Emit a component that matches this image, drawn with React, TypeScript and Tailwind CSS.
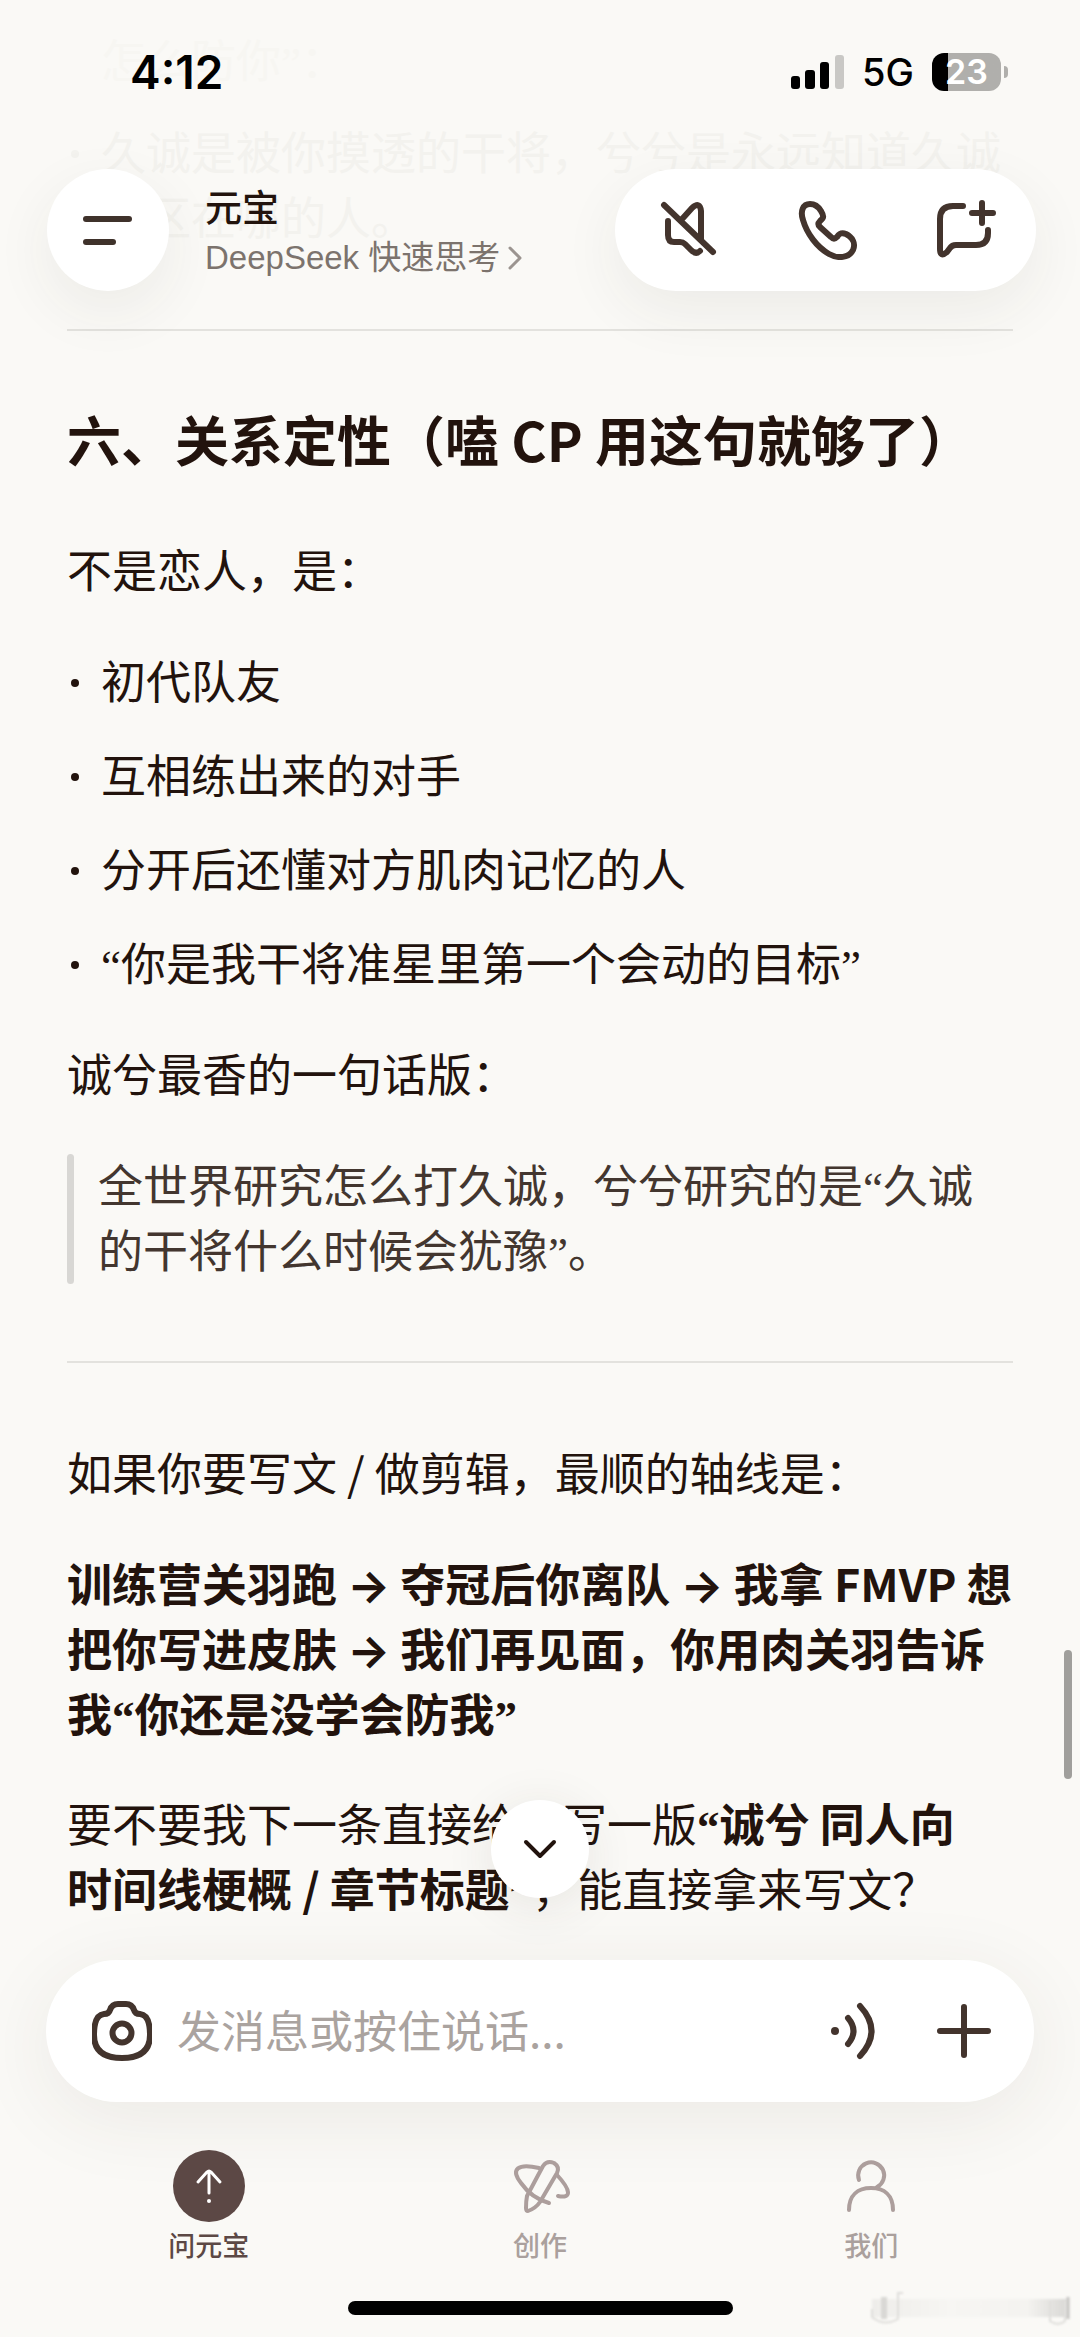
import type { ReactNode } from 'react';

function StatusBar() {
  return (
    <div className="flex items-center justify-between pl-[130px] pr-[72px] pt-12 h-24">
      <time className="text-[46px] leading-12 font-semibold font-[Inter,sans-serif]">4:12</time>
      <div className="flex items-center gap-[18px]">
        <svg width="53" height="34" viewBox="0 0 53 34" aria-hidden="true">
          <rect x="0" y="21" width="9" height="13" rx="3" />
          <rect x="14" y="15" width="10" height="19" rx="3" />
          <rect x="29" y="7" width="9" height="27" rx="3" />
          <rect x="44" y="0" width="9" height="34" rx="3" fill="#c9c8c5" />
        </svg>
        <span className="text-[38px] leading-10 font-medium font-[Inter,sans-serif]">5G</span>
        <div className="flex items-center gap-[3px]">
          <div className="flex h-[38px] w-[69px] items-center justify-center rounded-xl bg-linear-to-r from-black from-23% to-[#b0afac] to-23%">
            <span className="text-[34px] leading-[38px] font-semibold text-white font-[Inter,sans-serif]">23</span>
          </div>
          <div className="h-3 w-1 rounded-r-full bg-[#b0afac]" />
        </div>
      </div>
    </div>
  );
}

function IconButton({ label, children }: { label: string; children: ReactNode }) {
  return (
    <button type="button" aria-label={label} className="flex shrink-0 items-center justify-center">
      <svg
        width="60"
        height="60"
        viewBox="0 0 60 60"
        fill="none"
        stroke="currentColor"
        strokeWidth="6"
        strokeLinecap="round"
        strokeLinejoin="round"
        aria-hidden="true"
      >
        {children}
      </svg>
    </button>
  );
}

function Header() {
  return (
    <header className="absolute inset-x-0 top-0 z-10 text-black">
      <StatusBar />
      <div className="flex items-center justify-between pl-[47px] pr-11 pt-[73px]">
        <div className="flex items-center gap-9">
          <button
            type="button"
            aria-label="菜单"
            className="flex size-[122px] flex-col justify-center gap-[17px] rounded-full bg-white pl-9 shadow-[0_20px_60px_rgba(60,50,40,0.07)]"
          >
            <span className="h-[6px] w-[49px] rounded-full bg-[#3f322b]" />
            <span className="h-[6px] w-[33px] rounded-full bg-[#3f322b]" />
          </button>
          <div className="pt-1">
            <h1 className="mb-1 text-[37px] leading-[48px] font-medium text-[#22130d]">元宝</h1>
            <button
              type="button"
              className="flex items-center gap-2 text-[33px] leading-[48px] text-[#7c736d] font-['Liberation_Sans','Noto_Sans_CJK_SC',sans-serif]"
            >
              DeepSeek 快速思考
              <svg width="14" height="24" viewBox="0 0 14 24" fill="none" stroke="#9b9490" strokeWidth="3" strokeLinecap="round" strokeLinejoin="round" aria-hidden="true">
                <path d="M2 2l10 10L2 22" />
              </svg>
            </button>
          </div>
        </div>
        <div className="flex h-[122px] w-[421px] items-center justify-between rounded-full bg-white pl-11 pr-10 text-[#43342d] shadow-[0_20px_60px_rgba(60,50,40,0.07)]">
          <IconButton label="静音">
            <path d="M5 5l49 47M9 21v14q0 7 6 7h6q3 0 5 2l6 6q5 5 9 1M24 18l9-10q8-7 9 3v28" />
          </IconButton>
          <IconButton label="通话">
            <path d="M12 4C5 4 2 11 5 20c4 14 14 27 26 34 9 5 20 4 24-4 3-7-1-13-7-16-5-2-7 0-9 3-2 2-4 2-6 0L22 27c-2-2-2-4 0-6 4-3 4-5 1-10-3-5-6-7-11-7z" />
          </IconButton>
          <IconButton label="新对话">
            <path d="M27 6H17Q4 6 4 19v30q0 9 7 3l3-4q2-3 6-3h20q12 0 12-12v-3M46 3v20M36 13h21" />
          </IconButton>
        </div>
      </div>
    </header>
  );
}

// The CJK face draws quotes and arrows full width, so they get their own faces
function Quote({ children }: { children: string }) {
  return <span className="leading-none font-['Liberation_Serif',serif]">{children}</span>;
}

function Arrow() {
  return <span className="leading-none font-[Inter,sans-serif]">→</span>;
}

function Bullet({ children }: { children: ReactNode }) {
  return (
    <li className="flex items-start gap-[22px]">
      <span className="ml-1 mt-8 size-2 shrink-0 rounded-full bg-current" />
      <p>{children}</p>
    </li>
  );
}

function Message() {
  return (
    <article className="px-[67px] pt-[26px] text-[45px] leading-[65px]">
      <ul className="flex h-[303px] flex-col gap-[27px] text-[#f3f2ee]">
        <li className="pl-[34px] text-[#f7f6f2]">怎么防你<Quote>”</Quote>：</li>
        <Bullet>久诚是被你摸透的干将，兮兮是永远知道久诚盲区在哪的人。</Bullet>
      </ul>
      <hr className="border-t-2 border-[#e3e2de]" />
      <h2 className="mt-[73px] text-[54px] leading-[70px] font-bold">六、关系定性（嗑 CP 用这句就够了）</h2>
      <p className="mt-[62px]">不是恋人，是：</p>
      <ul className="mt-[46px] flex flex-col gap-[29px]">
        <Bullet>初代队友</Bullet>
        <Bullet>互相练出来的对手</Bullet>
        <Bullet>分开后还懂对方肌肉记忆的人</Bullet>
        <Bullet>
          <Quote>“</Quote>你是我干将准星里第一个会动的目标<Quote>”</Quote>
        </Bullet>
      </ul>
      <p className="mt-[46px]">诚兮最香的一句话版：</p>
      <blockquote className="mt-[46px] flex gap-6 text-[#43362f]">
        <span className="mt-[3px] -mb-[3px] w-[7px] shrink-0 rounded-full bg-[#d8d7d4]" />
        <p>
          全世界研究怎么打久诚，兮兮研究的是<Quote>“</Quote>久诚的干将什么时候会犹豫<Quote>”</Quote>。
        </p>
      </blockquote>
      <hr className="mt-20 border-t-2 border-[#e3e2de]" />
      <p className="mt-[76px]">如果你要写文 / 做剪辑，最顺的轴线是：</p>
      <p className="mt-[46px] font-bold">
        训练营关羽跑 <Arrow /> 夺冠后你离队 <Arrow /> 我拿 FMVP 想把你写进皮肤 <Arrow /> 我们再见面，你用肉关羽告诉我<Quote>“</Quote>你还是没学会防我<Quote>”</Quote>
      </p>
      <p className="mt-[45px]">
        要不要我下一条直接给你写一版
        <strong>
          <Quote>“</Quote>诚兮 同人向<br />时间线梗概 / 章节标题<Quote>”</Quote>
        </strong>
        ，能直接拿来写文？
      </p>
    </article>
  );
}

function Composer() {
  return (
    <form className="mx-[46px] flex h-[142px] items-center rounded-full bg-white pl-[46px] pr-10 text-[#43342d] shadow-[0_16px_80px_rgba(60,50,40,0.08)]">
      <IconButton label="拍照">
        <path d="M18 9q2-6 8-6h8q6 0 8 6 1 4 6 4 10 1 10 21 0 23-28 23T2 34q0-20 10-21 5 0 6-4z" />
        <circle cx="30" cy="32" r="9.5" />
      </IconButton>
      <input
        type="text"
        aria-label="发消息"
        placeholder="发消息或按住说话..."
        className="ml-[25px] min-w-0 flex-1 pb-1 text-[44px] leading-[65px] outline-none placeholder:text-[#aaa39f]"
      />
      <div className="flex gap-[50px]">
        <IconButton label="语音">
          <circle cx="11" cy="30" r="4" fill="currentColor" stroke="none" />
          <path d="M24 17q11 13 0 26M36 5q23 25 0 50" />
        </IconButton>
        <IconButton label="更多">
          <path d="M30 6v48M6 30h48" />
        </IconButton>
      </div>
    </form>
  );
}

function TabBar() {
  return (
    <nav className="grid grid-cols-3 px-[43px] pt-12 text-[27px] leading-9 text-[#aaa09d]">
      <a href="#ask" aria-current="page" className="flex flex-col items-center gap-[5px] font-medium text-[#5c4845]">
        <svg width="72" height="72" viewBox="0 0 72 72" fill="none" stroke="#fff" strokeWidth="3" strokeLinecap="round" strokeLinejoin="round" aria-hidden="true">
          <circle cx="36" cy="36" r="36" fill="#5c4845" stroke="none" />
          <path d="M36 43V21M25 32l9-10q2-2 4 0l9 10" />
          <circle cx="36" cy="51" r="2" fill="#fff" stroke="none" />
        </svg>
        问元宝
      </a>
      <a href="#create" className="flex flex-col items-center gap-[5px] font-medium">
        <svg width="72" height="72" viewBox="0 0 72 72" fill="none" stroke="#ac9e9c" strokeWidth="4" strokeLinecap="round" strokeLinejoin="round" aria-hidden="true">
          <path d="M23 46l16-30q4-6 11-3 6 4 3 10L36 52q-4 6-12 9-2 0-2-3 0-7 1-12z" />
          <path d="M35 18C14 13 6 19 17 33c7 10 17 17 28 20M53 25c14 15 15 24 1 21" />
        </svg>
        创作
      </a>
      <a href="#us" className="flex flex-col items-center gap-[5px] font-medium">
        <svg width="72" height="72" viewBox="0 0 72 72" fill="none" stroke="#ac9e9c" strokeWidth="4" strokeLinecap="round" strokeLinejoin="round" aria-hidden="true">
          <path d="M24 30a13 13 0 1 1 18 7M14 60C14 45 23 38 36 38s22 7 22 22" />
        </svg>
        我们
      </a>
    </nav>
  );
}

function Smudge() {
  return (
    <svg className="absolute right-2 bottom-2 blur-[1px]" width="202" height="40" viewBox="0 0 202 40" fill="none" aria-hidden="true">
      <defs>
        <linearGradient id="smear">
          <stop offset="0" stopColor="#eeedea" />
          <stop offset="0.4" stopColor="#f7f6f3" />
          <stop offset="0.8" stopColor="#f4f3f0" />
          <stop offset="1" stopColor="#dad9d6" />
        </linearGradient>
      </defs>
      <rect x="2" y="10" width="194" height="18" fill="url(#smear)" />
      <path d="M14 8v22" stroke="#d9d8d5" strokeWidth="6" />
      <path d="M2 20v8q12 10 26 2V4h5M180 12v20q8 6 15 0V12" stroke="#dfdedb" strokeWidth="2" />
      <path d="M198 8v22" stroke="#c4c3c0" strokeWidth="3" />
    </svg>
  );
}

export default function App() {
  return (
    <div className="relative flex min-h-screen flex-col overflow-hidden bg-[#faf9f6] text-[#22130d] font-['Noto_Sans_CJK_SC',sans-serif]">
      <Header />
      <Message />
      <div className="absolute right-2 top-[1650px] h-[129px] w-2 rounded-full bg-[#a09f9c]" />
      <footer className="relative mt-auto pb-[22px]">
        <button
          type="button"
          aria-label="回到底部"
          className="absolute -top-[160px] left-1/2 flex size-[98px] -translate-x-1/2 items-center justify-center rounded-full bg-white shadow-[0_8px_50px_rgba(60,50,40,0.1)]"
        >
          <svg width="34" height="20" viewBox="0 0 34 20" fill="none" stroke="currentColor" strokeWidth="4" strokeLinecap="round" strokeLinejoin="round" aria-hidden="true">
            <path d="M3 3l14 14L31 3" />
          </svg>
        </button>
        <Composer />
        <TabBar />
        <div className="mx-auto mt-[38px] h-[14px] w-[385px] rounded-full bg-black" />
        <Smudge />
      </footer>
    </div>
  );
}
